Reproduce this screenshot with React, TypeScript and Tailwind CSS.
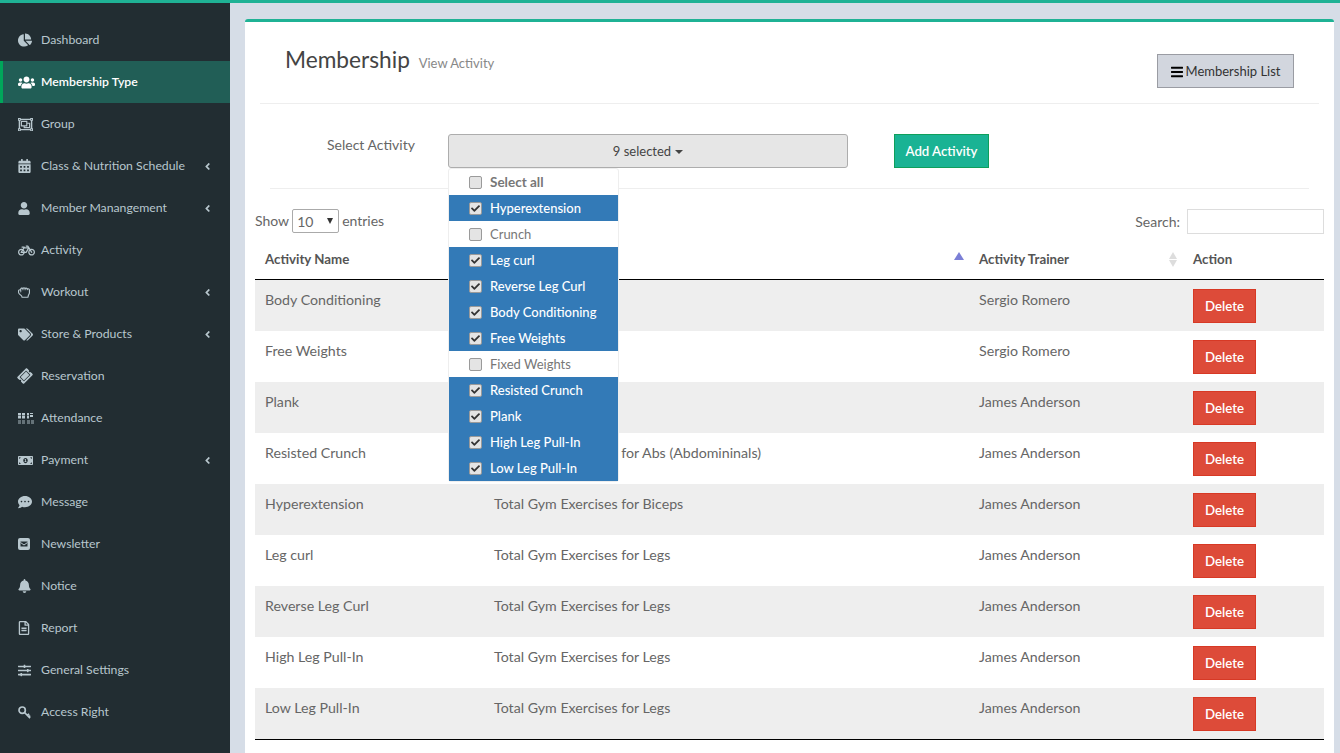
import { IconType } from 'react-icons'
import {
  FaAngleLeft,
  FaBars,
  FaBell,
  FaBicycle,
  FaCalendarAlt,
  FaChartPie,
  FaCheck,
  FaCommentDots,
  FaMoneyBillAlt,
  FaRegFileAlt,
  FaRegHandRock,
  FaRegObjectGroup,
  FaSlidersH,
  FaTags,
  FaTicketAlt,
  FaUser,
  FaUsers,
} from 'react-icons/fa'

function AttendanceIcon({ className }: { className?: string }) {
  return (
    <svg viewBox="0 0 16 11" className={className} fill="currentColor">
      <path d="M0 0h3v2.5H0zM4 0h3v2.5H4zM0 3h3v2.5H0zM4 3h3v2.5H4zM9 0h2v2.5H9zM12 0h3v1h-3zM12 2h3v2h-3zM9 3h2v2.5H9z" />
      <path d="M0 7h3v4H0zM4 7h3v4H4zM9 7h3v4H9zM13 7h3v4h-3z" fillOpacity="0.45" />
    </svg>
  )
}

function NewsletterIcon({ className }: { className?: string }) {
  return (
    <svg viewBox="0 0 12 12" className={className}>
      <rect width="12" height="12" rx="2" fill="currentColor" />
      <path d="M2.5 3.5h7v5h-7z" fill="#222d32" />
      <path d="M2.5 4.5 6 7l3.5-2.5" fill="none" stroke="currentColor" strokeWidth="1" />
    </svg>
  )
}

function KeyIcon({ className }: { className?: string }) {
  return (
    <svg viewBox="0 0 14 14" className={className} fill="none" stroke="currentColor" strokeWidth="1.8">
      <circle cx="4.5" cy="4.5" r="3.4" />
      <path d="M7 7l6 6M10 10l2-1.5M11.6 11.6l1.6-1.2" />
    </svg>
  )
}

type NavItem = {
  label: string
  icon: IconType | typeof AttendanceIcon
  iconClass: string
  arrow?: boolean
  active?: boolean
}

const navItems: NavItem[] = [
  { label: 'Dashboard', icon: FaChartPie, iconClass: 'w-[14px] h-[14px]' },
  { label: 'Membership Type', icon: FaUsers, iconClass: 'w-[17px] h-[17px]', active: true },
  { label: 'Group', icon: FaRegObjectGroup, iconClass: 'w-[15px] h-[15px]' },
  { label: 'Class & Nutrition Schedule', icon: FaCalendarAlt, iconClass: 'w-[13px] h-[14px]', arrow: true },
  { label: 'Member Manangement', icon: FaUser, iconClass: 'w-[12px] h-[13px]', arrow: true },
  { label: 'Activity', icon: FaBicycle, iconClass: 'w-[17px] h-[17px]' },
  { label: 'Workout', icon: FaRegHandRock, iconClass: 'w-[12px] h-[13px]', arrow: true },
  { label: 'Store & Products', icon: FaTags, iconClass: 'w-[15px] h-[15px]', arrow: true },
  { label: 'Reservation', icon: FaTicketAlt, iconClass: 'w-[14px] h-[14px] -rotate-45' },
  { label: 'Attendance', icon: AttendanceIcon, iconClass: 'w-[16px] h-[11px]' },
  { label: 'Payment', icon: FaMoneyBillAlt, iconClass: 'w-[15px] h-[15px]', arrow: true },
  { label: 'Message', icon: FaCommentDots, iconClass: 'w-[14px] h-[14px]' },
  { label: 'Newsletter', icon: NewsletterIcon, iconClass: 'w-[12px] h-[12px]' },
  { label: 'Notice', icon: FaBell, iconClass: 'w-[13px] h-[14px]' },
  { label: 'Report', icon: FaRegFileAlt, iconClass: 'w-[12px] h-[14px]' },
  { label: 'General Settings', icon: FaSlidersH, iconClass: 'w-[13px] h-[13px]' },
  { label: 'Access Right', icon: KeyIcon, iconClass: 'w-[13px] h-[13px]' },
]

const options = [
  { label: 'Hyperextension', checked: true },
  { label: 'Crunch', checked: false },
  { label: 'Leg curl', checked: true },
  { label: 'Reverse Leg Curl', checked: true },
  { label: 'Body Conditioning', checked: true },
  { label: 'Free Weights', checked: true },
  { label: 'Fixed Weights', checked: false },
  { label: 'Resisted Crunch', checked: true },
  { label: 'Plank', checked: true },
  { label: 'High Leg Pull-In', checked: true },
  { label: 'Low Leg Pull-In', checked: true },
]

const rows = [
  ['Body Conditioning', '', 'Sergio Romero'],
  ['Free Weights', '', 'Sergio Romero'],
  ['Plank', '', 'James Anderson'],
  ['Resisted Crunch', 'Total Gym Exercises for Abs (Abdomininals)', 'James Anderson'],
  ['Hyperextension', 'Total Gym Exercises for Biceps', 'James Anderson'],
  ['Leg curl', 'Total Gym Exercises for Legs', 'James Anderson'],
  ['Reverse Leg Curl', 'Total Gym Exercises for Legs', 'James Anderson'],
  ['High Leg Pull-In', 'Total Gym Exercises for Legs', 'James Anderson'],
  ['Low Leg Pull-In', 'Total Gym Exercises for Legs', 'James Anderson'],
]

function Checkbox({ checked }: { checked: boolean }) {
  return (
    <span className="w-[13px] h-[13px] rounded-[2px] border border-[#9a9a9a] bg-[#e4e4e4] flex items-center justify-center shrink-0">
      {checked && <FaCheck className="w-[9px] h-[9px] text-[#333]" />}
    </span>
  )
}

export default function App() {
  return (
    <div className="w-[1340px] h-[753px] overflow-hidden flex flex-col bg-[#d6dde7] font-['Lato','Noto_Sans',sans-serif] text-[#666]">
      <div className="h-[3px] bg-[#1fb295] shrink-0" />
      <div className="flex flex-1 min-h-0">
        {/* Sidebar */}
        <aside className="w-[230px] shrink-0 bg-[#222d32] pt-[16px]">
          {navItems.map((item) => {
            const Icon = item.icon
            return (
              <div
                key={item.label}
                className={
                  item.active
                    ? 'h-[42px] flex items-center bg-[#215e56] border-l-[3px] border-[#00a65a] text-white font-semibold text-[12.25px]'
                    : 'h-[42px] flex items-center border-l-[3px] border-transparent text-[#b8c7ce] text-[12.25px]'
                }
              >
                <span className="w-[21px] ml-[15px] flex items-center justify-start">
                  <Icon className={item.iconClass} />
                </span>
                <span className="ml-[2px] flex-1 whitespace-nowrap">{item.label}</span>
                {item.arrow && <FaAngleLeft className="w-[11px] h-[11px] mr-[17px]" />}
              </div>
            )
          })}
        </aside>

        {/* Main card */}
        <main className="flex-1 min-w-0 pl-[15px] pr-[6px] pt-[16px]">
          <div className="bg-white border-t-[3px] border-[#1fb295] rounded-t-[3px] h-[800px] px-[10px]">
            <div className="mx-[5px] h-[82px] border-b border-[#eee] flex items-start justify-between pl-[25px] pr-[25px]">
              <h1 className="mt-[24px] text-[22.7px] leading-[28px] text-[#444]">
                Membership <span className="ml-[3px] text-[13px] text-[#888]">View Activity</span>
              </h1>
              <button className="mt-[32px] h-[34px] w-[137px] pt-[1px] bg-[#d2d6de] border border-[#9a9ca3] text-[#333] text-[13px] flex items-center justify-center gap-[3px]">
                <FaBars className="w-[12px] h-[14px] text-black" />
                Membership List
              </button>
            </div>

            <div className="relative mx-[15px] h-[85px] border-b border-[#eee] pt-[30px] flex items-start">
              <label className="ml-[57px] w-[121px] mt-[1px] text-[14px] leading-[20px]">Select Activity</label>
              <div className="relative">
                <button className="w-[400px] h-[34px] pt-[1px] bg-[#e6e6e6] border border-[#adadad] rounded-[3px] text-[#444] text-[13px] flex items-center justify-center gap-[4px]">
                  9 selected
                  <span className="w-0 h-0 border-x-[4px] border-x-transparent border-t-[4px] border-t-[#444]" />
                </button>
                <div className="absolute left-0 top-[34px] z-10 w-[171px] bg-white border border-[#eee] rounded-[3px] text-[13px]">
                  <div className="h-[26px] flex items-center pl-[20px] gap-[8px] font-bold text-[13.5px] text-[#777]">
                    <Checkbox checked={false} />
                    Select all
                  </div>
                  {options.map((o) => (
                    <div
                      key={o.label}
                      className={
                        o.checked
                          ? 'h-[26px] pt-[1px] flex items-center pl-[20px] gap-[8px] bg-[#337ab7] text-white font-medium'
                          : 'h-[26px] pt-[1px] flex items-center pl-[20px] gap-[8px] bg-white text-[#777]'
                      }
                    >
                      <Checkbox checked={o.checked} />
                      {o.label}
                    </div>
                  ))}
                </div>
              </div>
              <button className="ml-[46px] w-[95px] h-[34px] pt-[1px] bg-[#1ab394] border border-[#0e9f5b] text-white text-[13.2px] font-semibold">
                Add Activity
              </button>
            </div>

            <div className="h-[51px] flex items-start justify-between pt-[20px]">
              <div className="flex items-center gap-[3px] text-[14px] h-[24px]">
                <span className="-translate-y-[1px]">Show</span>
                <div className="w-[47px] h-[24px] border border-[#aaa] rounded-[2px] flex items-center justify-between pl-[4px] pr-[5px] text-[14px]">
                  10
                  <span className="w-0 h-0 border-x-[3.5px] border-x-transparent border-t-[6px] border-t-[#333]" />
                </div>
                <span className="-translate-y-[1px]">entries</span>
              </div>
              <div className="flex items-center gap-[7px] text-[14px]">
                Search:
                <input className="w-[137px] h-[25px] border border-[#ddd] bg-white" />
              </div>
            </div>

            <table className="w-[1069px] table-fixed border-separate border-spacing-0 text-[14.2px]">
              <colgroup>
                <col className="w-[229px]" />
                <col className="w-[485px]" />
                <col className="w-[214px]" />
                <col />
              </colgroup>
              <thead>
                <tr className="h-[40px] text-left text-[#555]">
                  <th className="px-[10px] font-bold text-[13.3px] border-b border-black">Activity Name</th>
                  <th className="pl-[10px] pr-[5px] font-bold text-[13.3px] border-b border-black">
                    <div className="flex items-center justify-end">
                      <span className="w-0 h-0 border-x-[5px] border-x-transparent border-b-[8px] border-b-[#7b7fd6] mb-[7px]" />
                    </div>
                  </th>
                  <th className="px-[10px] font-bold text-[13.3px] border-b border-black">
                    <div className="flex items-center justify-between">
                      Activity Trainer
                      <span className="flex flex-col gap-[1px] mr-[-4px]">
                        <span className="w-0 h-0 border-x-[4px] border-x-transparent border-b-[7px] border-b-[#ddd]" />
                        <span className="w-0 h-0 border-x-[4px] border-x-transparent border-t-[7px] border-t-[#ddd]" />
                      </span>
                    </div>
                  </th>
                  <th className="px-[10px] font-bold text-[13.3px] border-b border-black">Action</th>
                </tr>
              </thead>
              <tbody>
                {rows.map((r, i) => {
                  const bg = i % 2 === 0 ? 'bg-[#eeeeee]' : 'bg-white'
                  const last = i === rows.length - 1
                  return (
                    <tr key={r[0]} className={last ? `h-[52px] align-top ${bg}` : `h-[51px] align-top ${bg}`}>
                      {r.map((text, c) => (
                        <td
                          key={c}
                          className={
                            last
                              ? 'px-[10px] pt-[9px] whitespace-nowrap border-b border-black'
                              : 'px-[10px] pt-[9px] whitespace-nowrap'
                          }
                        >
                          {text}
                        </td>
                      ))}
                      <td className={last ? 'px-[10px] pt-[9px] border-b border-black' : 'px-[10px] pt-[9px]'}>
                        <button className="w-[63px] h-[34px] pt-[1px] bg-[#dd4b39] border border-[#d73925] text-white text-[13.3px] font-semibold">
                          Delete
                        </button>
                      </td>
                    </tr>
                  )
                })}
              </tbody>
            </table>
          </div>
        </main>
      </div>
    </div>
  )
}
